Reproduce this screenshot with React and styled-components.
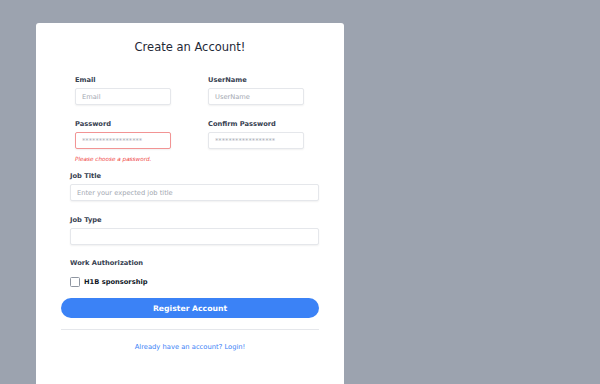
import React from "react";
import styled, { createGlobalStyle } from "styled-components";

const GlobalStyle = createGlobalStyle`
  html, body {
    margin: 0;
    padding: 0;
    height: 100%;
    overflow: hidden;
    background: #9ca3af;
    font-family: "DejaVu Sans", Verdana, sans-serif;
  }
`;

const Page = styled.div`
  padding: 23px 0 0 36px;
`;

const Card = styled.div`
  width: 308px;
  box-sizing: border-box;
  background: #ffffff;
  border-radius: 3px;
  padding: 17px 25px 48px;
`;

const Title = styled.h3`
  margin: 0 0 21px;
  font-size: 11.5px;
  line-height: 14px;
  font-weight: 400;
  color: #1f2937;
  text-align: center;
`;

const Fields = styled.div`
  padding-left: 9px;
  display: flex;
  flex-direction: column;
`;

const TwoCol = styled.div`
  display: grid;
  grid-template-columns: 96px 96px;
  column-gap: 37px;
  padding-left: 5px;
  margin-top: ${(p) => p.$top || 0}px;
`;

const Group = styled.div`
  display: flex;
  flex-direction: column;
  margin-top: ${(p) => p.$top || 0}px;
`;

const Label = styled.label`
  display: block;
  font-size: 6.7px;
  line-height: 10px;
  font-weight: 700;
  color: #374151;
  margin-bottom: 3px;
`;

const Input = styled.input`
  box-sizing: border-box;
  width: 100%;
  height: 17px;
  margin: 0;
  padding: 0 6px;
  font-family: inherit;
  font-size: 6.7px;
  color: #374151;
  background: #fff;
  border: 1px solid ${(p) => (p.$error ? "#f29494" : "#e5e7eb")};
  border-radius: 2px;
  box-shadow: 0 1px 2px rgba(0, 0, 0, 0.06);
  outline: none;
  &::placeholder {
    color: #a3a8b1;
  }
`;

const ErrorText = styled.p`
  margin: 6px 0 0;
  font-size: 5.7px;
  line-height: 8px;
  font-style: italic;
  color: #ef4444;
`;

const SectionLabel = styled.div`
  margin-top: 13px;
  font-size: 6.7px;
  line-height: 10px;
  font-weight: 700;
  color: #374151;
`;

const CheckRow = styled.label`
  display: flex;
  align-items: center;
  gap: 4px;
  margin-top: 9px;
  height: 10px;
  font-size: 6.7px;
  font-weight: 700;
  color: #111827;
`;

const Check = styled.input`
  appearance: none;
  margin: 0;
  width: 10px;
  height: 10px;
  box-sizing: border-box;
  border: 1px solid #8f96a1;
  border-radius: 1.5px;
  background: #fff;
`;

const Button = styled.button`
  display: block;
  width: 100%;
  height: 20px;
  margin-top: 11px;
  border: none;
  border-radius: 10px;
  background: #3b82f6;
  color: #ffffff;
  font-family: inherit;
  font-size: 7.7px;
  font-weight: 700;
  cursor: pointer;
`;

const Divider = styled.hr`
  margin: 11px 0 0;
  border: none;
  border-top: 1px solid #e5e7eb;
`;

const Footer = styled.div`
  margin-top: 12px;
  text-align: center;
  font-size: 6.75px;
  line-height: 10px;
`;

const Link = styled.a`
  color: #3b82f6;
  text-decoration: none;
`;

export default function App() {
  return (
    <>
      <GlobalStyle />
      <Page>
        <Card>
          <Title>Create an Account!</Title>
          <Fields>
            <TwoCol>
              <Group>
                <Label htmlFor="email">Email</Label>
                <Input id="email" type="email" placeholder="Email" />
              </Group>
              <Group>
                <Label htmlFor="username">UserName</Label>
                <Input id="username" type="text" placeholder="UserName" />
              </Group>
            </TwoCol>
            <TwoCol $top={14}>
              <Group>
                <Label htmlFor="password">Password</Label>
                <Input
                  id="password"
                  type="password"
                  placeholder="******************"
                  $error
                />
                <ErrorText>Please choose a password.</ErrorText>
              </Group>
              <Group>
                <Label htmlFor="confirm">Confirm Password</Label>
                <Input
                  id="confirm"
                  type="password"
                  placeholder="******************"
                />
              </Group>
            </TwoCol>
            <Group $top={8}>
              <Label htmlFor="jobtitle">Job Title</Label>
              <Input
                id="jobtitle"
                type="text"
                placeholder="Enter your expected job title"
              />
            </Group>
            <Group $top={14}>
              <Label htmlFor="jobtype">Job Type</Label>
              <Input id="jobtype" type="text" />
            </Group>
            <SectionLabel>Work Authorization</SectionLabel>
            <CheckRow>
              <Check type="checkbox" />
              H1B sponsorship
            </CheckRow>
          </Fields>
          <Button type="button">Register Account</Button>
          <Divider />
          <Footer>
            <Link href="#">Already have an account? Login!</Link>
          </Footer>
        </Card>
      </Page>
    </>
  );
}
